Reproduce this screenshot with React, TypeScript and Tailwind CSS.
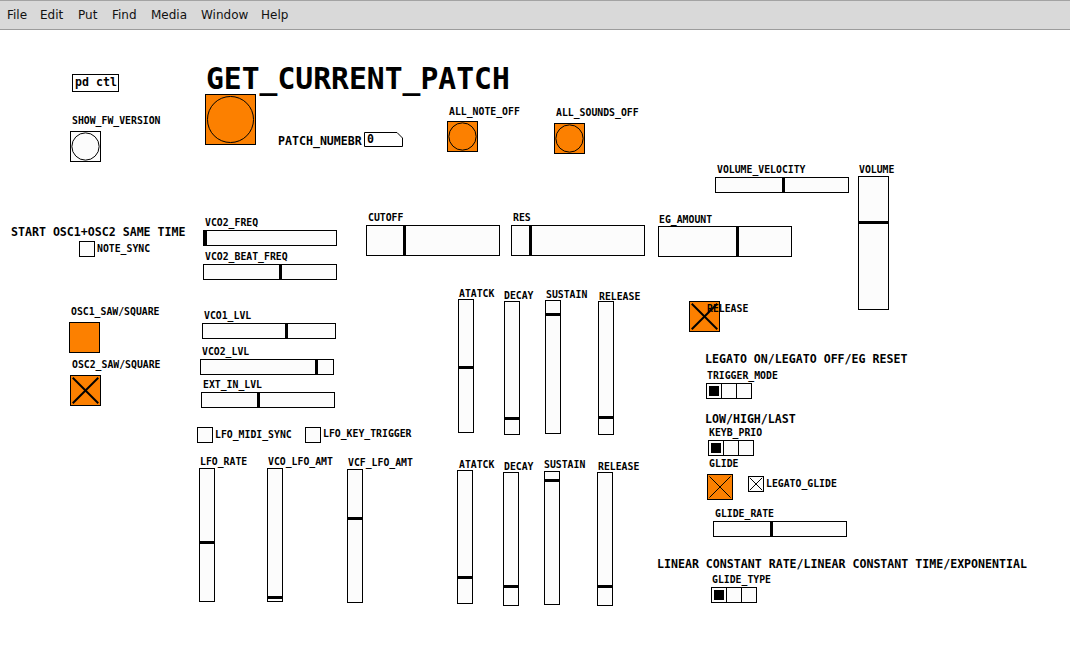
import type { ReactNode } from 'react';

const Label = ({ className, children }: { className: string; children: ReactNode }) => (
  <div className={`absolute whitespace-nowrap text-[9.8px] font-bold leading-none text-black ${className}`}>
    {children}
  </div>
);

const Comment = ({ className, children }: { className: string; children: ReactNode }) => (
  <div className={`absolute whitespace-nowrap text-[11.6px] font-bold leading-none text-black ${className}`}>
    {children}
  </div>
);

const HSlider = ({ className, knob }: { className: string; knob: number }) => (
  <div className={`absolute border border-black bg-[#fcfcfc] ${className}`}>
    <div className="absolute top-0 bottom-0 w-[3px] bg-black" style={{ left: knob }} />
  </div>
);

const VSlider = ({ className, knob }: { className: string; knob: number }) => (
  <div className={`absolute border border-black bg-[#fcfcfc] ${className}`}>
    <div className="absolute left-0 right-0 h-[3px] bg-black" style={{ top: knob }} />
  </div>
);

const Bang = ({ className, orange }: { className: string; orange?: boolean }) => (
  <div className={`absolute border border-black ${orange ? 'bg-[#fc8000]' : 'bg-[#fcfcfc]'} ${className}`}>
    <svg className="absolute inset-0 h-full w-full" viewBox="0 0 100 100">
      <circle cx="50" cy="50" r="47" fill="none" stroke="black" strokeWidth="1" vectorEffect="non-scaling-stroke" />
    </svg>
  </div>
);

const Toggle = ({
  className,
  orange,
  on,
  thick
}: {
  className: string;
  orange?: boolean;
  on?: boolean;
  thick?: boolean;
}) => (
  <div className={`absolute border border-black ${orange ? 'bg-[#fc8000]' : 'bg-[#fcfcfc]'} ${className}`}>
    {on && (
      <svg className="absolute inset-0 h-full w-full" viewBox="0 0 100 100" preserveAspectRatio="none">
        <line x1="6" y1="6" x2="94" y2="94" stroke="black" strokeWidth={thick ? 2 : 1} vectorEffect="non-scaling-stroke" />
        <line x1="94" y1="6" x2="6" y2="94" stroke="black" strokeWidth={thick ? 2 : 1} vectorEffect="non-scaling-stroke" />
      </svg>
    )}
  </div>
);

const Radio = ({ className }: { className: string }) => (
  <div className={`absolute flex h-[16px] border border-black bg-[#fcfcfc] ${className}`}>
    <div className="flex w-[14px] items-center justify-center">
      <div className="h-[10px] w-[10px] bg-black" />
    </div>
    <div className="w-[15px] border-l border-black" />
    <div className="w-[15px] border-l border-black" />
  </div>
);

const menu = [
  { name: 'File', w: 'w-[33px]' },
  { name: 'Edit', w: 'w-[38px]' },
  { name: 'Put', w: 'w-[34px]' },
  { name: 'Find', w: 'w-[39px]' },
  { name: 'Media', w: 'w-[50px]' },
  { name: 'Window', w: 'w-[60px]' },
  { name: 'Help', w: 'w-[40px]' }
];

const App = () => {
  return (
    <div className="h-[646px] w-[1070px] overflow-hidden bg-white">
      {/* menu bar */}
      <div className="flex h-[30px] items-center border-t border-b border-t-[#a3a3a3] border-b-[#9c9c9c] bg-[#d9d9d9] pl-[7px] font-['DejaVu_Sans',sans-serif] text-[12px] text-[#111]">
        {menu.map(item => (
          <div key={item.name} className={item.w}>
            {item.name}
          </div>
        ))}
      </div>

      <div className="relative h-[616px] font-['DejaVu_Sans_Mono',monospace]">
        <div className="absolute left-[72px] top-[44px] flex h-[18px] w-[47px] items-center border border-black pl-[2px] text-[11.6px] font-bold leading-none">
          pd ctl
        </div>

        <div className="absolute left-[206px] top-[34px] whitespace-nowrap text-[29.7px] font-bold leading-none">
          GET_CURRENT_PATCH
        </div>
        <Bang className="left-[205px] top-[64px] h-[51px] w-[51px]" orange />

        <Comment className="left-[278px] top-[105.5px]">PATCH_NUMEBR</Comment>
        <div className="absolute left-[364px] top-[102px] h-[15px] w-[39px]">
          <svg className="absolute inset-0" width="39" height="15" viewBox="0 0 39 15">
            <path d="M0.5 0.5 H33 L38.5 6 V14.5 H0.5 Z" fill="white" stroke="black" strokeWidth="1" />
          </svg>
          <div className="absolute left-[3px] top-[1.5px] text-[11.6px] font-bold leading-none">0</div>
        </div>

        <Label className="left-[449px] top-[77px]">ALL_NOTE_OFF</Label>
        <Bang className="left-[447px] top-[91px] h-[31px] w-[31px]" orange />
        <Label className="left-[556px] top-[78px]">ALL_SOUNDS_OFF</Label>
        <Bang className="left-[554px] top-[93px] h-[31px] w-[31px]" orange />

        <Label className="left-[72px] top-[85.5px]">SHOW_FW_VERSION</Label>
        <Bang className="left-[70px] top-[101px] h-[31px] w-[31px]" />

        <Comment className="left-[11px] top-[197px]">START OSC1+OSC2 SAME TIME</Comment>
        <Toggle className="left-[79px] top-[211px] h-[16px] w-[16px]" />
        <Label className="left-[97px] top-[214px]">NOTE_SYNC</Label>

        {/* oscillator sliders */}
        <Label className="left-[205px] top-[188px]">VCO2_FREQ</Label>
        <HSlider className="left-[203px] top-[200px] h-[16px] w-[134px]" knob={0} />
        <Label className="left-[205px] top-[222px]">VCO2_BEAT_FREQ</Label>
        <HSlider className="left-[203px] top-[234px] h-[16px] w-[134px]" knob={75} />
        <Label className="left-[204px] top-[281px]">VCO1_LVL</Label>
        <HSlider className="left-[202px] top-[293px] h-[16px] w-[134px]" knob={82} />
        <Label className="left-[202px] top-[317px]">VCO2_LVL</Label>
        <HSlider className="left-[200px] top-[329px] h-[16px] w-[134px]" knob={114} />
        <Label className="left-[203px] top-[350px]">EXT_IN_LVL</Label>
        <HSlider className="left-[201px] top-[362px] h-[16px] w-[134px]" knob={55} />

        {/* filter */}
        <Label className="left-[368px] top-[183px]">CUTOFF</Label>
        <HSlider className="left-[366px] top-[195px] h-[31px] w-[134px]" knob={36} />
        <Label className="left-[513px] top-[183px]">RES</Label>
        <HSlider className="left-[511px] top-[195px] h-[31px] w-[134px]" knob={17} />
        <Label className="left-[659px] top-[185px]">EG_AMOUNT</Label>
        <HSlider className="left-[658px] top-[196px] h-[31px] w-[134px]" knob={77} />

        <Label className="left-[717px] top-[135px]">VOLUME_VELOCITY</Label>
        <HSlider className="left-[715px] top-[147px] h-[16px] w-[134px]" knob={66} />
        <Label className="left-[859px] top-[135px]">VOLUME</Label>
        <VSlider className="left-[858px] top-[146px] h-[134px] w-[31px]" knob={44} />

        {/* envelope 1 */}
        <Label className="left-[459px] top-[259px]">ATATCK</Label>
        <VSlider className="left-[458px] top-[269px] h-[134px] w-[16px]" knob={66} />
        <Label className="left-[504px] top-[261px]">DECAY</Label>
        <VSlider className="left-[504px] top-[271px] h-[134px] w-[16px]" knob={115} />
        <Label className="left-[546px] top-[259.5px]">SUSTAIN</Label>
        <VSlider className="left-[545px] top-[270px] h-[134px] w-[16px]" knob={12} />
        <Label className="left-[599px] top-[261.5px]">RELEASE</Label>
        <VSlider className="left-[598px] top-[271px] h-[134px] w-[16px]" knob={114} />

        {/* envelope 2 */}
        <Label className="left-[459px] top-[429.5px]">ATATCK</Label>
        <VSlider className="left-[457px] top-[440px] h-[134px] w-[16px]" knob={105} />
        <Label className="left-[504px] top-[432px]">DECAY</Label>
        <VSlider className="left-[503px] top-[442px] h-[134px] w-[16px]" knob={112} />
        <Label className="left-[544px] top-[430px]">SUSTAIN</Label>
        <VSlider className="left-[544px] top-[441px] h-[134px] w-[16px]" knob={7} />
        <Label className="left-[598px] top-[431.5px]">RELEASE</Label>
        <VSlider className="left-[597px] top-[442px] h-[134px] w-[16px]" knob={112} />

        {/* waveform toggles */}
        <Label className="left-[71px] top-[277px]">OSC1_SAW/SQUARE</Label>
        <Toggle className="left-[69px] top-[292px] h-[31px] w-[31px]" orange />
        <Label className="left-[72px] top-[329.5px]">OSC2_SAW/SQUARE</Label>
        <Toggle className="left-[70px] top-[345px] h-[31px] w-[31px]" orange on thick />

        {/* lfo */}
        <Toggle className="left-[197px] top-[397px] h-[16px] w-[16px]" />
        <Label className="left-[215px] top-[400px]">LFO_MIDI_SYNC</Label>
        <Toggle className="left-[305px] top-[397px] h-[16px] w-[16px]" />
        <Label className="left-[323px] top-[399px]">LFO_KEY_TRIGGER</Label>

        <Label className="left-[200px] top-[426.5px]">LFO_RATE</Label>
        <VSlider className="left-[199px] top-[438px] h-[134px] w-[16px]" knob={72} />
        <Label className="left-[268px] top-[427px]">VCO_LFO_AMT</Label>
        <VSlider className="left-[267px] top-[438px] h-[134px] w-[16px]" knob={127} />
        <Label className="left-[348px] top-[428px]">VCF_LFO_AMT</Label>
        <VSlider className="left-[347px] top-[439px] h-[134px] w-[16px]" knob={47} />

        {/* right column */}
        <Toggle className="left-[689px] top-[271px] h-[31px] w-[31px]" orange on thick />
        <Label className="left-[707px] top-[273.5px]">RELEASE</Label>

        <Comment className="left-[705px] top-[324px]">LEGATO ON/LEGATO OFF/EG RESET</Comment>
        <Label className="left-[707px] top-[340.5px]">TRIGGER_MODE</Label>
        <Radio className="left-[706px] top-[353px]" />

        <Comment className="left-[705px] top-[384px]">LOW/HIGH/LAST</Comment>
        <Label className="left-[709px] top-[397.5px]">KEYB_PRIO</Label>
        <Radio className="left-[708px] top-[410px]" />

        <Label className="left-[709px] top-[429px]">GLIDE</Label>
        <Toggle className="left-[707px] top-[444px] h-[26px] w-[26px]" orange on />
        <Toggle className="left-[748px] top-[446px] h-[16px] w-[16px]" on />
        <Label className="left-[766px] top-[449px]">LEGATO_GLIDE</Label>

        <Label className="left-[715px] top-[479px]">GLIDE_RATE</Label>
        <HSlider className="left-[713px] top-[491px] h-[16px] w-[134px]" knob={56} />

        <Comment className="left-[657px] top-[529px]">LINEAR CONSTANT RATE/LINEAR CONSTANT TIME/EXPONENTIAL</Comment>
        <Label className="left-[712px] top-[544.5px]">GLIDE_TYPE</Label>
        <Radio className="left-[711px] top-[557px]" />
      </div>
    </div>
  );
};

export default App;
